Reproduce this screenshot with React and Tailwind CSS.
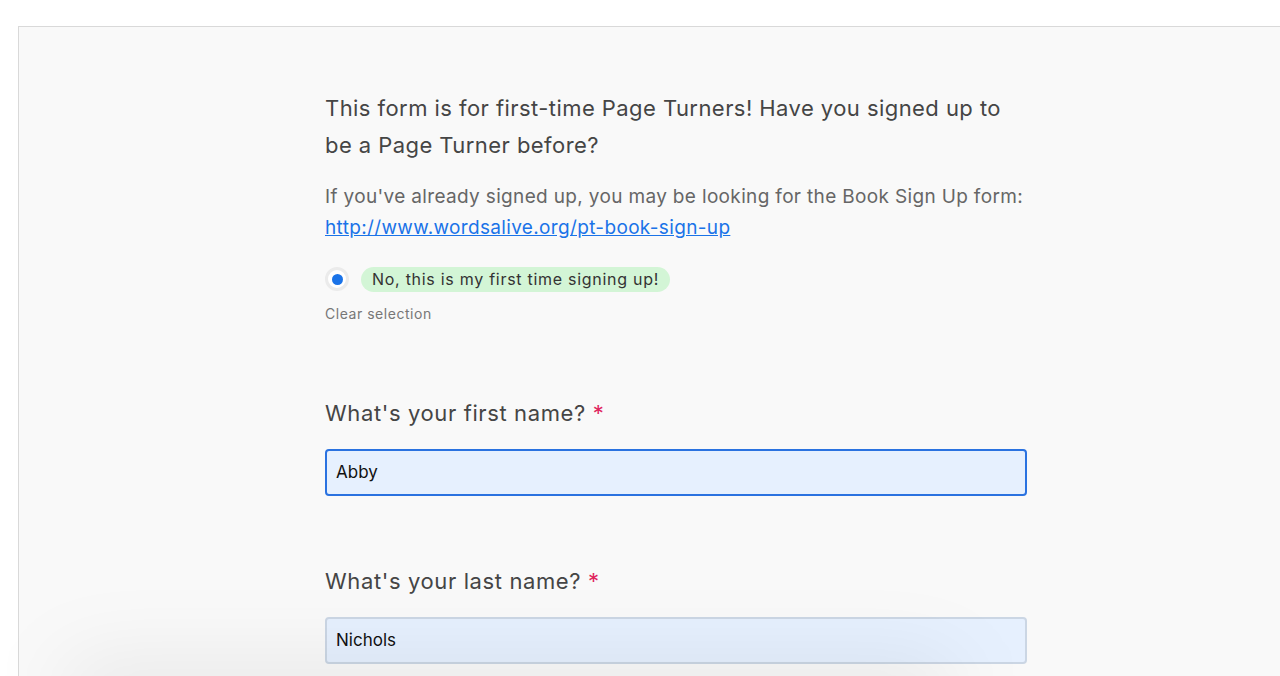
export default function App() {
  return (
    <div
      className="relative h-[676px] w-[1280px] overflow-hidden bg-white pl-[18px] pt-[26px]"
      style={{ fontFamily: "Inter, 'Noto Sans', sans-serif" }}
    >
      <div className="h-[660px] border-l border-t border-[#d9d9d9] bg-[#f9f9f9]">
        <div className="ml-[306px] w-[702px] pt-[63px]">
          <h2 className="text-[22px] leading-[37px] tracking-[0.02em] text-[#454545]">
            This form is for first-time Page Turners! Have you signed up to be a Page Turner before?
          </h2>
          <p className="mt-[17px] text-[19px] leading-[31px] tracking-[0.018em] text-[#666666]">
            If you've already signed up, you may be looking for the Book Sign Up form:{" "}
            <a href="#" className="text-[#1a73e8] underline">
              http://www.wordsalive.org/pt-book-sign-up
            </a>
          </p>

          {/* radio option */}
          <div className="mt-[24px] flex h-[24px] items-center">
            <span className="flex h-[24px] w-[24px] items-center justify-center rounded-full border-[3px] border-[#ebebeb] bg-white">
              <span className="h-[11px] w-[11px] rounded-full bg-[#1a73e8]" />
            </span>
            <span className="ml-[12px] flex h-[25px] items-center rounded-full bg-[#d3f5d6] px-[11px] text-[16px] tracking-[0.045em] text-[#333333]">
              No, this is my first time signing up!
            </span>
          </div>
          <div className="mt-[13px] text-[14px] leading-[20px] tracking-[0.038em] text-[#777777]">
            Clear selection
          </div>

          {/* first name */}
          <label className="mt-[74px] block text-[22px] leading-[30px] tracking-[0.028em] text-[#454545]">
            What's your first name? <span className="text-[#e0245e]">*</span>
          </label>
          <div className="mt-[21px] flex h-[47px] items-center rounded-[4px] border-2 border-[#2a72e0] bg-[#e6f0fe] px-[9px] text-[17px] text-[#111111]">
            Abby
          </div>

          {/* last name */}
          <label className="mt-[70px] block text-[22px] leading-[30px] tracking-[0.028em] text-[#454545]">
            What's your last name? <span className="text-[#e0245e]">*</span>
          </label>
          <div className="mt-[21px] flex h-[47px] items-center rounded-[4px] border-2 border-[#cbd6e4] bg-[#e6f0fe] px-[9px] text-[17px] text-[#111111]">
            Nichols
          </div>
        </div>
      </div>

      {/* soft shadow from a sheet below the viewport */}
      <div className="pointer-events-none absolute bottom-[-55px] left-[60px] h-[70px] w-[900px] rounded-full bg-black/[0.07] blur-2xl" />
    </div>
  );
}
